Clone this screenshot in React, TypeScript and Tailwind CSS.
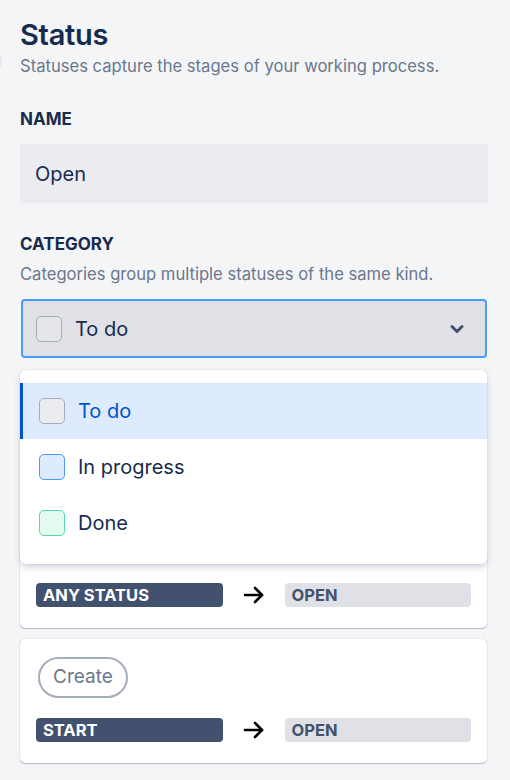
import React from "react";

type Cat = { label: string; box: string };

const categories: Cat[] = [
  { label: "To do", box: "bg-[#ebecf0] border-[#a5adba]" },
  { label: "In progress", box: "bg-[#deebff] border-[#4c9aff]" },
  { label: "Done", box: "bg-[#e3fcef] border-[#57d9a3]" },
];

function Arrow() {
  return (
    <svg width="24" height="24" viewBox="0 0 24 24" fill="none" stroke="#000" strokeWidth="2.6" strokeLinecap="round" strokeLinejoin="round">
      <path d="M3 12h17" />
      <path d="M13 5l7 7-7 7" />
    </svg>
  );
}

function Transition({ from }: { from: string }) {
  return (
    <div className="grid grid-cols-[1fr_auto_1fr] items-center gap-[19px]">
      <div className="h-6 rounded-[4px] bg-[#42526e] pl-[7px] text-[16.5px] font-bold leading-6 text-white uppercase">{from}</div>
      <Arrow />
      <div className="h-6 rounded-[4px] bg-[#dfe1e6] pl-[7px] text-[16.5px] font-bold leading-6 text-[#42526e] uppercase">Open</div>
    </div>
  );
}

export default function App() {
  return (
    <div
      className="relative min-h-[780px] overflow-hidden bg-[#f4f5f7] pl-5 pr-[22px] pt-[17px] text-[#172b4d]"
      style={{ fontFamily: "Inter, 'Noto Sans', sans-serif" }}
    >
      <div className="absolute -left-[22px] top-[49px] h-6 w-6 rounded-full bg-[#e6e7eb]" />

      <h1 className="text-[29px] font-semibold leading-[36px] tracking-[-0.01em]">Status</h1>
      <p className="mt-[3px] text-[16.6px] leading-5 text-[#6b778c]">Statuses capture the stages of your working process.</p>

      <div className="mt-[33px] text-[17px] font-bold leading-5">NAME</div>
      <div className="mt-[15px] flex h-[59px] items-center bg-[#ebecf0] px-[15px] text-[20px]">Open</div>

      <div className="mt-[31px] text-[17px] font-bold leading-5">CATEGORY</div>
      <p className="mt-[10px] text-[16.6px] leading-5 text-[#6b778c]">Categories group multiple statuses of the same kind.</p>

      <div className="relative mt-[15px]">
        <div className="mx-px flex h-[59px] items-center gap-[13px] rounded-[4px] border-2 border-[#4c9aff] bg-[#dfe1e6] pl-[13px] pr-4">
          <span className="h-[26px] w-[26px] rounded-[5px] border border-[#a5adba] bg-[#e4e6ea]" />
          <span className="flex-1 text-[20px]">To do</span>
          <svg width="24" height="24" viewBox="0 0 24 24" fill="none" stroke="#42526e" strokeWidth="3" strokeLinecap="round" strokeLinejoin="round">
            <path d="M7 9.5l5 5 5-5" />
          </svg>
        </div>

        {/* open dropdown menu, drawn over the cards below */}
        <div className="absolute left-0 right-px top-[calc(100%+12px)] z-10 rounded-[5px] bg-white py-[13px] shadow-[0_4px_8px_-2px_rgba(9,30,66,0.25),0_0_1px_rgba(9,30,66,0.35)]">
          {categories.map((c, i) => (
            <div
              key={c.label}
              className={
                "flex h-14 items-center gap-[13px] text-[20px] " +
                (i === 0 ? "border-l-[3px] border-[#0052cc] bg-[#deebff] pl-[16px] text-[#0052cc]" : "pl-[19px]")
              }
            >
              <span className={"h-[26px] w-[26px] rounded-[5px] border " + c.box} />
              <span>{c.label}</span>
            </div>
          ))}
        </div>
      </div>

      <div className="mt-[197px] flex flex-col gap-[11px] pr-px">
        <div className="rounded-[5px] bg-white px-4 pb-[21px] pt-[28px] shadow-[0_1px_1px_rgba(9,30,66,0.25),0_0_1px_rgba(9,30,66,0.31)]">
          <Transition from="Any status" />
        </div>
        <div className="rounded-[5px] bg-white px-4 pb-[21px] pt-[18px] shadow-[0_1px_1px_rgba(9,30,66,0.25),0_0_1px_rgba(9,30,66,0.31)]">
          <div className="ml-[2px] inline-flex h-[41px] items-center rounded-full border-2 border-[#a5adba] px-[13px] text-[19px] text-[#6b778c]">Create</div>
          <div className="mt-5">
            <Transition from="Start" />
          </div>
        </div>
      </div>
    </div>
  );
}
